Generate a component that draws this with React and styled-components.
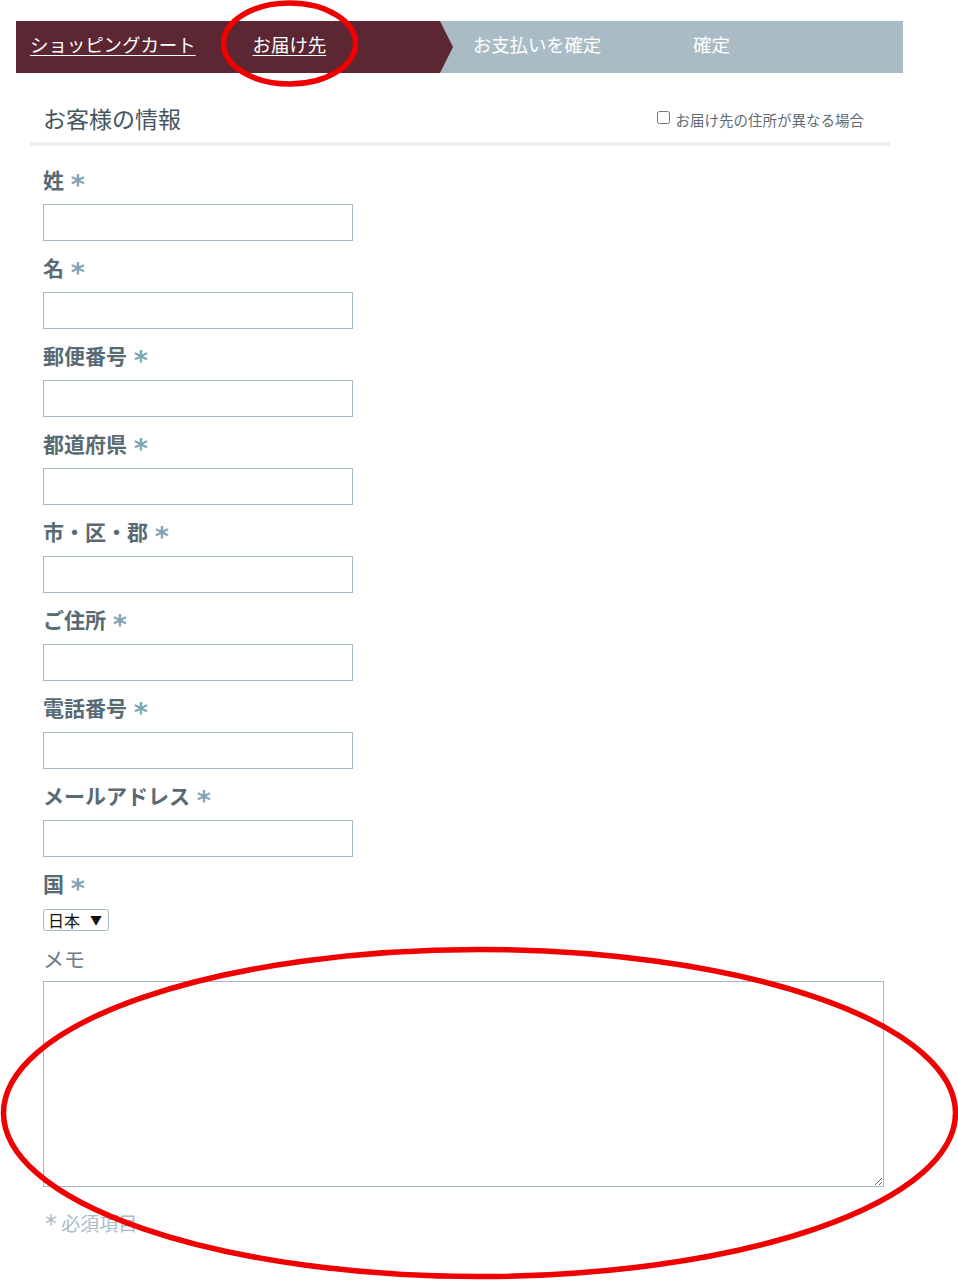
import React from "react";
import styled, { createGlobalStyle } from "styled-components";

const GlobalStyle = createGlobalStyle`
  body {
    margin: 0;
    background: #ffffff;
    font-family: "Noto Sans CJK JP", "Noto Sans", sans-serif;
  }
`;

const fields = [
  "姓",
  "名",
  "郵便番号",
  "都道府県",
  "市・区・郡",
  "ご住所",
  "電話番号",
  "メールアドレス",
];

const App = () => {
  return (
    <PageStyle>
      <GlobalStyle />
      <StepBar>
        <DoneSteps>
          <StepLink>ショッピングカート</StepLink>
          <StepLink>お届け先</StepLink>
        </DoneSteps>
        <TodoStep $gap="20px">お支払いを確定</TodoStep>
        <TodoStep $gap="92px">確定</TodoStep>
      </StepBar>

      <HeaderRow>
        <Heading>お客様の情報</Heading>
        <CheckLabel>
          <Check type="checkbox" />
          お届け先の住所が異なる場合
        </CheckLabel>
      </HeaderRow>
      <Divider />

      <Form>
        {fields.map((name) => (
          <Field key={name}>
            <Label>
              {name} <Star>*</Star>
            </Label>
            <Input type="text" />
          </Field>
        ))}
        <Field>
          <Label>
            国 <Star>*</Star>
          </Label>
          <SelectWrap>
            <Select defaultValue="jp">
              <option value="jp">日本</option>
            </Select>
          </SelectWrap>
        </Field>
        <Field>
          <Label $light>メモ</Label>
          <Memo />
        </Field>
        <Required>
          <Star $light>*</Star> 必須項目
        </Required>
      </Form>

      <Marks viewBox="0 0 958 1280">
        <ellipse cx="289.5" cy="43.5" rx="66" ry="40.5" />
        <ellipse cx="479.5" cy="1113" rx="476" ry="163.5" />
      </Marks>
    </PageStyle>
  );
};

export default App;

const PageStyle = styled.div`
  position: relative;
  width: 958px;
  height: 1280px;
  padding: 21px 0 0 16px;
  box-sizing: border-box;
  overflow: hidden;
`;

const StepBar = styled.div`
  width: 887px;
  height: 52px;
  display: flex;
  align-items: center;
  background: #a9bcc5;
  font-size: 18.5px;
  line-height: 24px;
  color: #ffffff;
`;

const DoneSteps = styled.div`
  width: 437px;
  height: 100%;
  box-sizing: border-box;
  padding: 0 0 7px 14px;
  display: flex;
  align-items: center;
  gap: 57px;
  background: #5c2632;
  clip-path: polygon(0 0, calc(100% - 13px) 0, 100% 50%, calc(100% - 13px) 100%, 0 100%);
`;

const StepLink = styled.a`
  color: #ffffff;
  text-decoration: underline;
  text-underline-offset: 3px;
  white-space: nowrap;
  letter-spacing: -0.1px;
`;

const TodoStep = styled.span`
  margin-left: ${(props) => props.$gap};
  margin-bottom: 7px;
  white-space: nowrap;
  letter-spacing: -0.2px;
`;

const HeaderRow = styled.div`
  width: 860px;
  margin: 30px 0 0 14px;
  padding: 0 26px 0 13px;
  box-sizing: border-box;
  display: flex;
  align-items: center;
  justify-content: space-between;
`;

const Heading = styled.h2`
  margin: 0;
  font-size: 23px;
  font-weight: 400;
  line-height: 30px;
  color: #46555e;
`;

const CheckLabel = styled.label`
  display: flex;
  align-items: center;
  gap: 6px;
  margin-top: 2px;
  font-size: 14.5px;
  color: #5d6c74;
`;

const Check = styled.input`
  width: 13px;
  height: 13px;
  margin: 0 0 4px 0;
  accent-color: #a9bcc5;
`;

const Divider = styled.div`
  width: 860px;
  height: 4px;
  margin: 9px 0 0 14px;
  background: #eef2f4;
`;

const Form = styled.div`
  padding: 21px 0 0 27px;
  display: flex;
  flex-direction: column;
  gap: 14px;
`;

const Field = styled.div`
  display: flex;
  flex-direction: column;
  align-items: flex-start;
  gap: 13px;
`;

const Label = styled.label`
  display: block;
  height: 24px;
  font-size: 21px;
  line-height: 24px;
  font-weight: ${(props) => (props.$light ? 400 : 700)};
  color: ${(props) => (props.$light ? "#6b7d87" : "#586a74")};
`;

const Star = styled.span`
  display: inline-block;
  margin-left: 2px;
  font-family: "DejaVu Sans", sans-serif;
  font-size: ${(props) => (props.$light ? "24px" : "27px")};
  line-height: 0;
  font-weight: ${(props) => (props.$light ? 400 : 700)};
  color: ${(props) => (props.$light ? "#a9bcc5" : "#7ea2b6")};
  transform: translateY(${(props) => (props.$light ? "1px" : "6px")});
`;

const Input = styled.input`
  width: 310px;
  height: 37px;
  box-sizing: border-box;
  border: 1.5px solid #a3b9c4;
  border-radius: 0;
  background: #ffffff;
  &:focus {
    outline: none;
  }
`;

const SelectWrap = styled.span`
  position: relative;
  display: inline-block;
  &::after {
    content: "▼";
    position: absolute;
    left: 47px;
    top: 3px;
    font-size: 12px;
    color: #111111;
    pointer-events: none;
  }
`;

const Select = styled.select`
  appearance: none;
  width: 66px;
  height: 22px;
  box-sizing: border-box;
  padding: 0 0 0 4px;
  border: 1px solid #a3b9c4;
  border-radius: 3px;
  background: #ffffff;
  font-family: "Noto Sans CJK JP", sans-serif;
  font-size: 16px;
  line-height: 20px;
  color: #111111;
`;

const Memo = styled.textarea`
  width: 841px;
  height: 206px;
  box-sizing: border-box;
  border: 1.5px solid #a3b9c4;
  border-radius: 0;
  resize: both;
  margin-top: -2px;
`;

const Required = styled.p`
  margin: 10px 0 0 0;
  font-size: 19px;
  line-height: 24px;
  color: #a9bcc5;
`;

const Marks = styled.svg`
  position: absolute;
  left: 0;
  top: 0;
  width: 958px;
  height: 1280px;
  pointer-events: none;
  fill: none;
  stroke: #f00000;
  stroke-width: 5.5px;
`;
